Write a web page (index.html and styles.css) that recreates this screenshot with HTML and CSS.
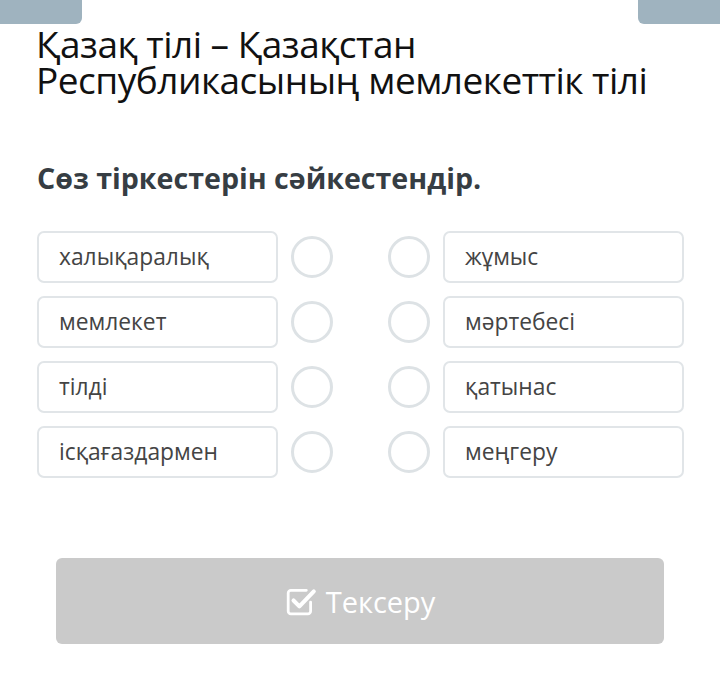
FILE: index.html
```html
<!DOCTYPE html>
<html lang="kk">
<head>
<meta charset="UTF-8">
<title>Қазақ тілі</title>
<meta name="viewport" content="width=device-width, initial-scale=1.0">
<link rel="stylesheet" href="styles.css">
</head>
<body>
<div class="tabs">
<div class="tab"></div>
<div class="tab"></div>
</div>

<h1 class="title">Қазақ тілі – Қазақстан Республикасының мемлекеттік тілі</h1>

<h2 class="task">Сөз тіркестерін сәйкестендір.</h2>

<div class="match">
<div class="row">
<div class="word">халықаралық</div><span class="dot"></span>
<span class="dot"></span><div class="word">жұмыс</div>
</div>
<div class="row">
<div class="word">мемлекет</div><span class="dot"></span>
<span class="dot"></span><div class="word">мәртебесі</div>
</div>
<div class="row">
<div class="word">тілді</div><span class="dot"></span>
<span class="dot"></span><div class="word">қатынас</div>
</div>
<div class="row">
<div class="word">ісқағаздармен</div><span class="dot"></span>
<span class="dot"></span><div class="word">меңгеру</div>
</div>
</div>

<button class="check">
<svg width="32" height="30" viewBox="0 0 30 28" fill="none" stroke="#fff" stroke-width="2.6" stroke-linecap="round" stroke-linejoin="round">
<path d="M20 4H5.5A2.5 2.5 0 0 0 3 6.5v17A2.5 2.5 0 0 0 5.5 26h16a2.5 2.5 0 0 0 2.5-2.5V15"/>
<path d="M8 13.5l5.5 5.5L27 5" stroke-width="3.8"/>
</svg>
<span>Тексеру</span>
</button>
</body>
</html>
```

FILE: styles.css
```css
body {
font-family: "Open Sans", "Noto Sans", sans-serif;
margin: 0;
background: #fff;
color: #222;
width: 720px;
}

.tabs {
display: flex;
justify-content: space-between;
height: 24px;
}

.tab {
width: 82px;
height: 24px;
background: #9fb3bf;
}

.tab:first-child {
border-bottom-right-radius: 6px;
}

.tab:last-child {
border-bottom-left-radius: 6px;
}

.title {
font-weight: 400;
font-size: 37px;
line-height: 36px;
margin: 2px 60px 0 36px;
color: #111;
letter-spacing: -0.5px;
}

.task {
font-weight: 700;
font-size: 28.6px;
line-height: 34px;
margin: 63px 0 0 37px;
color: #363d43;
}

/* колонкалар */
.match {
margin: 36px 0 0 37px;
display: flex;
flex-direction: column;
gap: 13px;
}

.row {
display: flex;
align-items: center;
height: 52px;
}

.word {
box-sizing: border-box;
width: 241px;
height: 52px;
border: 2px solid #e1e5e8;
border-radius: 7px;
padding: 0 20px;
font-size: 22.8px;
line-height: 48px;
color: #444;
}

.dot {
box-sizing: border-box;
width: 42px;
height: 42px;
border: 3px solid #dde2e5;
border-radius: 50%;
margin-left: 13px;
}

.dot + .dot {
margin-left: 55px;
margin-right: 13px;
}

.check {
display: flex;
align-items: center;
justify-content: center;
gap: 9px;
margin: 80px 0 0 56px;
width: 608px;
height: 86px;
border: none;
border-radius: 6px;
background: #cacaca;
color: #fff;
font-family: "Open Sans", "Noto Sans", sans-serif;
font-size: 29px;
}
```
